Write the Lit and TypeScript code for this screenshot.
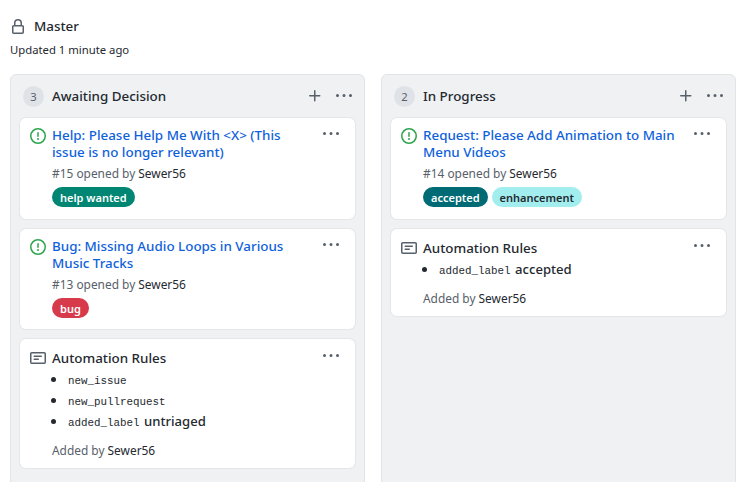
import { LitElement, html, css, svg } from "lit";
import { customElement } from "lit/decorators.js";

const icon = (d: any, size: number, cls: string) =>
  html`<svg class=${cls} width=${size} height=${size} viewBox="0 0 16 16" fill="currentColor">${d}</svg>`;

const LOCK = svg`<path fill-rule="evenodd" d="M4 4a4 4 0 0 1 8 0v2h.25c.966 0 1.75.784 1.75 1.75v5.5A1.75 1.75 0 0 1 12.25 15h-8.5A1.75 1.75 0 0 1 2 13.25v-5.5C2 6.784 2.784 6 3.75 6H4Zm8.25 3.5h-8.5a.25.25 0 0 0-.25.25v5.5c0 .138.112.25.25.25h8.5a.25.25 0 0 0 .25-.25v-5.5a.25.25 0 0 0-.25-.25ZM10.5 6V4a2.5 2.5 0 1 0-5 0v2Z"/>`;
const KEBAB = svg`<path d="M8 9a1.5 1.5 0 1 0 0-3 1.5 1.5 0 0 0 0 3ZM1.5 9a1.5 1.5 0 1 0 0-3 1.5 1.5 0 0 0 0 3Zm13 0a1.5 1.5 0 1 0 0-3 1.5 1.5 0 0 0 0 3Z"/>`;
const PLUS = svg`<path d="M7.75 2a.75.75 0 0 1 .75.75V7h4.25a.75.75 0 0 1 0 1.5H8.5v4.25a.75.75 0 0 1-1.5 0V8.5H2.75a.75.75 0 0 1 0-1.5H7V2.75A.75.75 0 0 1 7.75 2Z"/>`;
const ISSUE = svg`<path fill-rule="evenodd" d="M8 1.5a6.5 6.5 0 100 13 6.5 6.5 0 000-13zM0 8a8 8 0 1116 0A8 8 0 010 8zm9 3a1 1 0 11-2 0 1 1 0 012 0zm-.25-6.25a.75.75 0 00-1.5 0v3.5a.75.75 0 001.5 0v-3.5z"/>`;
const NOTE = svg`<path fill-rule="evenodd" d="M0 3.75C0 2.784.784 2 1.75 2h12.5c.966 0 1.75.784 1.75 1.75v8.5A1.75 1.75 0 0 1 14.25 14H1.75A1.75 1.75 0 0 1 0 12.25Zm1.75-.25a.25.25 0 0 0-.25.25v8.5c0 .138.112.25.25.25h12.5a.25.25 0 0 0 .25-.25v-8.5a.25.25 0 0 0-.25-.25ZM3.5 6.25a.75.75 0 0 1 .75-.75h7a.75.75 0 0 1 0 1.5h-7a.75.75 0 0 1-.75-.75Zm.75 2.25h4a.75.75 0 0 1 0 1.5h-4a.75.75 0 0 1 0-1.5Z"/>`;

type Label = { t: string; c: string };
const issue = (title: string, meta: string, labels: Label[]) => html`
  <div class="card">
    ${icon(ISSUE, 16, "lead green")}
    <div class="body">
      <a class="title">${title}</a>
      <div class="meta">${meta} opened by <span class="who">Sewer56</span></div>
      <div class="labels">${labels.map((l) => html`<span class="label ${l.c}">${l.t}</span>`)}</div>
    </div>
    ${icon(KEBAB, 16, "kebab")}
  </div>`;

const note = (rules: [string, string?][]) => html`
  <div class="card note">
    ${icon(NOTE, 16, "lead grey")}
    <div class="body">
      <div class="ntitle">Automation Rules</div>
      <ul>
        ${rules.map(([c, t]) => html`<li><code>${c}</code>${t ? html` <span>${t}</span>` : ""}</li>`)}
      </ul>
      <div class="added">Added by <span class="who">Sewer56</span></div>
    </div>
    ${icon(KEBAB, 16, "kebab")}
  </div>`;

@customElement("app-root")
export class AppRoot extends LitElement {
  static styles = css`
    :host {
      display: block;
      width: 745px;
      height: 482px;
      overflow: hidden;
      background: #fff;
      font-family: "Noto Sans", sans-serif;
      color: #24292f;
      box-sizing: border-box;
      padding: 16px 9px 0 10px;
    }
    .head { display: flex; align-items: center; gap: 8px; height: 19px; }
    .lock { color: #57606a; margin-top: 2px; }
    .name { font-size: 13.4px; font-weight: 500; }
    .updated { font-size: 11.3px; color: #24292f; margin-top: 6px; height: 17px; line-height: 17px; }
    .board { display: grid; grid-template-columns: 355px 355px; gap: 16px; margin-top: 16px; }
    .col {
      background: #eff1f3;
      border: 1px solid #e2e5e8;
      border-radius: 6px;
      height: 500px;
      box-sizing: border-box;
      padding: 0 9px;
    }
    .chead { display: flex; align-items: center; height: 43px; padding-left: 3px; }
    .count {
      width: 21px; height: 21px; border-radius: 50%;
      background: #dfe3e7; color: #57606a;
      font-size: 11.2px; display: flex; align-items: center; justify-content: center;
      margin-right: 8px;
    }
    .cname { font-size: 13.4px; font-weight: 500; flex: 1; margin-bottom: 2px; }
    .plus { color: #57606a; margin-right: 13px; margin-top: -2px; margin-left: 1px; }
    .ckebab { color: #57606a; margin-right: 3px; margin-top: -2px; }
    .card {
      background: #fff;
      border-radius: 6px;
      box-shadow: 0 0 0 1px #e4e7ea;
      display: flex;
      padding: 9px 16px 11.5px 10px;
      margin-bottom: 10px;
      width: 335px;
      box-sizing: border-box;
    }
    .card.note { padding: 10px 16px 9px 10px; }
    .lead { flex: none; margin-top: 1px; margin-right: 6px; }
    .green { color: #2da44e; }
    .grey { color: #57606a; }
    .body { flex: 1; min-width: 0; }
    .kebab { flex: none; color: #57606a; margin: -1px 0 0 0; }
    .title { display: block; color: #0f62dc; font-size: 13.4px; font-weight: 500; line-height: 17px; width: 258px; }
    .meta { font-size: 11.9px; color: #57606a; margin-top: 4px; line-height: 17px; }
    .added { font-size: 11.9px; color: #57606a; margin-top: 11px; line-height: 17px; }
    .who { color: #24292f; }
    .labels { display: flex; gap: 4px; margin-top: 5px; }
    .label {
      height: 20px; line-height: 21px; border-radius: 10px; padding: 0 8px;
      font-size: 11px; font-weight: 600; color: #fff;
    }
    .help { background: #008672; }
    .bug { background: #d73a4a; }
    .acc { background: #006b75; }
    .enh { background: #a2eeef; color: #24292f; }
    .ntitle { font-size: 13.4px; font-weight: 500; line-height: 19px; }
    ul { margin: 0; padding: 0 0 0 16px; }
    li { font-size: 13.4px; line-height: 21px; height: 21px; }
    li::marker { font-size: 15px; }
    code { font-family: "Liberation Mono", monospace; font-size: 10.85px; }
    li span { font-weight: 500; font-size: 13.1px; margin-left: 1px; }
  `;

  render() {
    return html`
      <div class="head">${icon(LOCK, 16, "lock")}<span class="name">Master</span></div>
      <div class="updated">Updated 1 minute ago</div>
      <div class="board">
        <section class="col">
          <div class="chead">
            <span class="count">3</span><span class="cname">Awaiting Decision</span>
            ${icon(PLUS, 16, "plus")}${icon(KEBAB, 16, "ckebab")}
          </div>
          ${issue("Help: Please Help Me With <X> (This issue is no longer relevant)", "#15", [{ t: "help wanted", c: "help" }])}
          ${issue("Bug: Missing Audio Loops in Various Music Tracks", "#13", [{ t: "bug", c: "bug" }])}
          ${note([["new_issue"], ["new_pullrequest"], ["added_label", "untriaged"]])}
        </section>
        <section class="col">
          <div class="chead">
            <span class="count">2</span><span class="cname">In Progress</span>
            ${icon(PLUS, 16, "plus")}${icon(KEBAB, 16, "ckebab")}
          </div>
          ${issue("Request: Please Add Animation to Main Menu Videos", "#14", [{ t: "accepted", c: "acc" }, { t: "enhancement", c: "enh" }])}
          ${note([["added_label", "accepted"]])}
        </section>
      </div>
    `;
  }
}
